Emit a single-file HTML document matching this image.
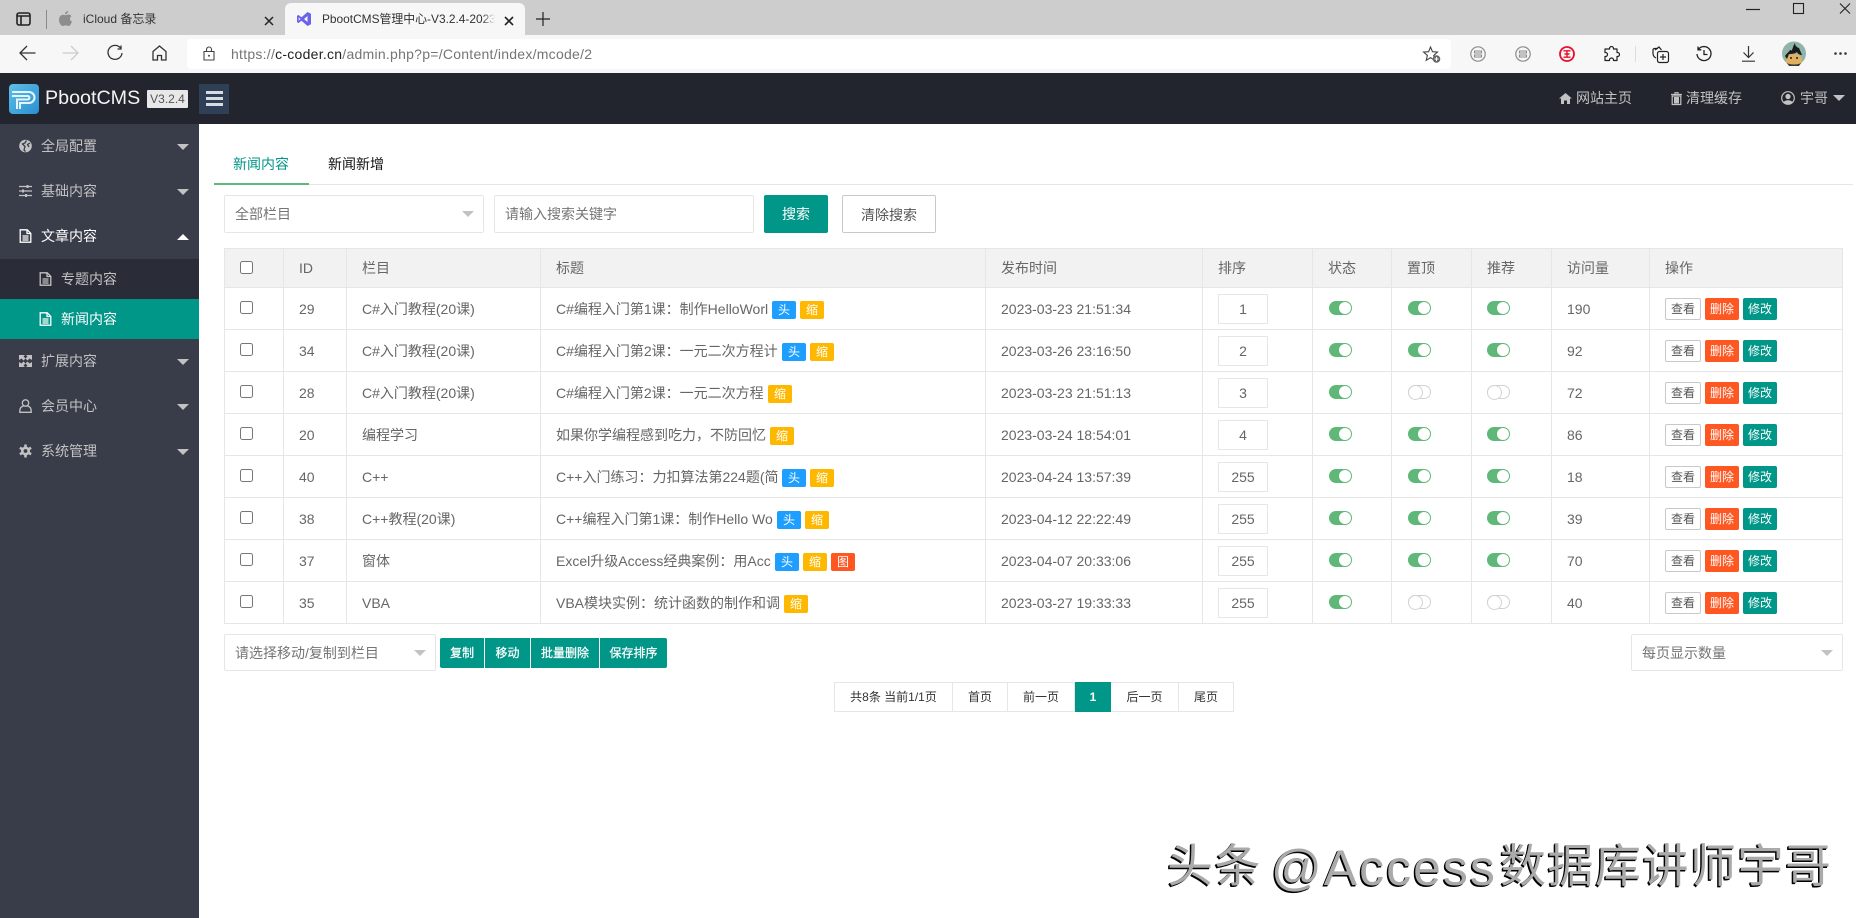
<!DOCTYPE html>
<html lang="zh"><head><meta charset="utf-8"><title>PbootCMS</title>
<style>
*{box-sizing:border-box}
html,body{margin:0;padding:0;width:1856px;height:918px;overflow:hidden;background:#fff;font-family:"Liberation Sans","Noto Sans CJK SC",sans-serif;font-size:14px;color:#666}
i{font-style:normal}
.a{position:absolute}
svg{display:block;overflow:visible}
.t{white-space:nowrap;line-height:20px}
.side{left:0;top:124px;width:199px;height:794px;background:#393d49}
.it{position:absolute;left:0;width:199px;height:45px;line-height:45px;color:#c2c2c2;padding-left:41px}
.it svg{position:absolute;left:19px;top:15px;width:13px;height:14px}
.car{position:absolute;left:177px;top:20px;width:0;height:0;border-left:6px solid transparent;border-right:6px solid transparent;border-top:6px solid #c2c2c2}
.sub{position:absolute;left:0;width:199px;height:40px;line-height:40px;padding-left:61px}
.sub svg{position:absolute;left:39px;top:13px;width:13px;height:14px}
.box{background:#fff;border:1px solid #e6e6e6;border-radius:2px;height:38px;line-height:37px;color:#757575;padding-left:10px}
.dc{position:absolute;width:0;height:0;border-left:6px solid transparent;border-right:6px solid transparent;border-top:6px solid #c2c2c2}
table{position:absolute;left:224px;top:248px;width:1619px;border-collapse:collapse;table-layout:fixed}
th,td{border:1px solid #e6e6e6;padding:0 15px;font-weight:400;text-align:left;color:#666;white-space:nowrap;position:relative}
th{height:39px;background:#f2f2f2}
td{height:42px}
.cb{display:block;position:relative;top:-1px;width:13px;height:13px;border:1px solid #767676;border-radius:2.5px;background:#fff}
.b{position:absolute;top:13px;width:24px;height:18px;line-height:18px;border-radius:2px;color:#fff;font-size:12px;text-align:center}
.h{background:#1e9fff}.o{background:#ffb800}.r{background:#ff5722}
.n{position:absolute;left:15px;top:6px;width:50px;height:30px;line-height:28px;border:1px solid #e6e6e6;text-align:center;color:#666;background:#fff}
.tg{position:absolute;top:13px;width:23px;height:14px;border-radius:7px;background:#5fb878}
.tg:after{content:"";position:absolute;right:1px;top:1px;width:12px;height:12px;border-radius:50%;background:#fff}
.tg.f{background:#fff;border:1.5px solid #d2d2d2}
.tg.f:after{right:auto;left:-1px;top:-1px;border:1.5px solid #d2d2d2;width:13px;height:13px}
.l{left:16px}.m{left:15px}
.ab{position:absolute;top:10px;height:22px;line-height:20px;font-size:12px;text-align:center;border-radius:2px;width:34px;color:#fff;border:1px solid transparent}
.v{left:15px;width:36px;background:#fff;border-color:#c9c9c9;color:#555}
.d{left:55px;background:#ff5722}
.e{left:93px;background:#009688}
.g{background:#009688;color:#fff;font-size:12px;text-align:center;height:30px;line-height:30px;top:638px;-webkit-text-stroke:.25px #fff}
.p{top:682px;height:30px;line-height:28px;border:1px solid #e6e6e6;border-left:0;font-size:12px;color:#333;text-align:center;background:#fff}
.w{position:absolute;white-space:nowrap;color:#aaa;text-shadow:-1.5px 1.5px 0 #000,-1px .5px 0 #111}
</style></head><body>

<svg width="0" height="0" style="position:absolute"><defs>
<symbol id="doc" viewBox="0 0 13 14"><path d="M1.2.8h7l3.600 3.600v8.800H1.200z M8 1v3.500h3.600 M3.500 7h6M3.500 9h6M3.500 11h6" fill="none" stroke="currentColor" stroke-width="1.300"/></symbol>
<symbol id="ring" viewBox="0 0 16 16"><circle cx="8" cy="8" r="7.200" fill="none" stroke="currentColor" stroke-width="1.200"/><path d="M4.500 5h7v2h-7zM4.500 9h7v2h-7z" fill="none" stroke="currentColor" stroke-width="1.100"/></symbol>
</defs></svg>

<!-- browser -->
<div class="a" style="left:0;top:0;width:1856px;height:35px;background:#cdcdcd"></div>
<div class="a" style="left:0;top:35px;width:1856px;height:38px;background:#f7f7f7"></div>
<svg class="a" style="left:16px;top:12px" width="15" height="14"><rect x="1" y="1" width="13" height="12" rx="2" fill="none" stroke="#222" stroke-width="1.600"/><path d="M1 4h13M5 4v9" stroke="#222" stroke-width="1.600"/></svg>
<div class="a" style="left:46px;top:10px;width:1px;height:19px;background:#8a8a8a"></div>
<svg class="a" style="left:59px;top:11px" width="13" height="15" viewBox="0 0 13 15"><path d="M9 0c0 2-1.500 3.300-3 3.300C6 1.500 7.500.2 9 0zM6.500 4.200c1 0 1.800-.7 3-.7 1.300 0 2.300.7 2.900 1.700-2.200 1.300-1.800 4.400.6 5.300-.7 1.900-2 4.500-3.500 4.500-1 0-1.500-.6-2.800-.6s-1.900.6-2.800.6C1.900 15 0 11.600 0 8.700 0 5.700 2 3.700 4 3.700c1 0 1.800.5 2.500.5z" fill="#8d8d8d"/></svg>
<div class="a t" style="left:83px;top:9px;font-size:12px;color:#333">iCloud 备忘录</div>
<svg class="a" style="left:264px;top:16px" width="10" height="10"><path d="M1 1l8 8M9 1l-8 8" stroke="#222" stroke-width="1.500"/></svg>
<div class="a" style="left:285px;top:3px;width:240px;height:32px;background:#f7f7f7;border-radius:6px 6px 0 0"></div>
<svg class="a" style="left:297px;top:12px" width="14" height="14" viewBox="0 0 14 14"><path d="M10.500 0L14 1.700v10.600L10.500 14 4.500 8.800 1.500 11 0 10.200V3.800L1.500 3l3 2.200zM10.500 4L7 7l3.500 3zM1.700 5.200v3.600L3.400 7z" fill="#6b63e8"/></svg>
<div class="a t" style="left:322px;top:9px;width:173px;overflow:hidden;font-size:11.9px;color:#333">PbootCMS管理中心-V3.2.4-2023</div>
<div class="a" style="left:482px;top:8px;width:13px;height:22px;background:linear-gradient(90deg,rgba(247,247,247,0),#f7f7f7)"></div>
<svg class="a" style="left:504px;top:16px" width="10" height="10"><path d="M1 1l8 8M9 1l-8 8" stroke="#222" stroke-width="1.600"/></svg>
<svg class="a" style="left:536px;top:12px" width="14" height="14"><path d="M7 0v14M0 7h14" stroke="#222" stroke-width="1.200"/></svg>
<svg class="a" style="left:1746px;top:3px" width="106" height="14"><path d="M0 6.500h14" stroke="#222" stroke-width="1.200"/><rect x="47.500" y=".5" width="10" height="10" fill="none" stroke="#222" stroke-width="1.100"/><path d="M94 .5l10 10M104 .5l-10 10" stroke="#222" stroke-width="1.100"/></svg>

<svg class="a" style="left:19px;top:45px" width="17" height="16"><path d="M16.500 8H1M8 1L1 8l7 7" fill="none" stroke="#333" stroke-width="1.300"/></svg>
<svg class="a" style="left:62px;top:45px" width="17" height="16"><path d="M.5 8H16M9 1l7 7-7 7" fill="none" stroke="#ccc" stroke-width="1.300"/></svg>
<svg class="a" style="left:107px;top:45px" width="16" height="16"><path d="M13.500 3A7 7 0 1 0 15 8M14 .5V4h-3.500" fill="none" stroke="#333" stroke-width="1.300"/></svg>
<svg class="a" style="left:152px;top:45px" width="15" height="16"><path d="M1 6.500L7.500 1 14 6.500V15H9.500v-4.500h-4V15H1z" fill="none" stroke="#333" stroke-width="1.300"/></svg>
<div class="a" style="left:187px;top:39px;width:1264px;height:30px;background:#fff;border-radius:4px"></div>
<svg class="a" style="left:203px;top:46px" width="12" height="15"><path d="M1 5.500h10V14H1zM3.500 5.500V3.500a2.500 2.500 0 0 1 5 0v2" fill="none" stroke="#444" stroke-width="1.100"/><circle cx="6" cy="9.700" r="1" fill="#444"/></svg>
<div class="a t" style="left:231px;top:44px;font-size:14px;color:#757575;letter-spacing:.26px">https://<span style="color:#222">c-coder.cn</span>/admin.php?p=/Content/index/mcode/2</div>
<svg class="a" style="left:1423px;top:46px" width="18" height="17"><path d="M7.500 1l2 4.700 5 .4-3.800 3.300 1.100 4.900-4.300-2.600-4.300 2.600 1.200-4.900L.6 6.100l5-.4z" fill="none" stroke="#444" stroke-width="1.100"/><circle cx="13.500" cy="13" r="3.800" fill="#666"/><path d="M13.500 11v4M11.500 13h4" stroke="#fff"/></svg>
<svg class="a" style="left:1470px;top:46px;color:#8c8c8c" width="16" height="16"><use href="#ring"/></svg>
<svg class="a" style="left:1515px;top:46px;color:#8c8c8c" width="16" height="16"><use href="#ring"/></svg>
<svg class="a" style="left:1559px;top:46px;color:#e60f2c" width="16" height="16"><circle cx="8" cy="8" r="7" fill="none" stroke="currentColor" stroke-width="1.800"/><path d="M4.500 4.800h7M4.500 11.200h7M8 4.800v6.400M5.500 8h5" stroke="currentColor" stroke-width="1.400"/></svg>
<svg class="a" style="left:1604px;top:46px" width="15" height="16"><path d="M5.500 3V2.500a2 2 0 0 1 4 0V3H13v3.500h.5a2 2 0 0 1 0 4H13V14.500H9.500V14a2 2 0 0 0-4 0v.5H1v-4h.5a2 2 0 0 0 0-4H1V3z" fill="none" stroke="#222" stroke-width="1.200" stroke-linejoin="round"/></svg>
<div class="a" style="left:1635px;top:46px;width:1px;height:16px;background:#ddd"></div>
<svg class="a" style="left:1652px;top:46px" width="17" height="17"><path d="M6 2.500H2.500A1.500 1.500 0 0 0 1 4v3.500c0 2 1 3.500 3 4.500" fill="none" stroke="#222" stroke-width="1.200"/><path d="M3 4l4-3 2.500 3" fill="none" stroke="#222" stroke-width="1.200"/><rect x="5.500" y="5.500" width="11" height="11" rx="2" fill="#f7f7f7" stroke="#222" stroke-width="1.200"/><path d="M11 8v6M8 11h6" stroke="#222" stroke-width="1.200"/></svg>
<svg class="a" style="left:1696px;top:46px" width="16" height="16"><path d="M2.300 3.500A7 7 0 1 1 1 8M2 .5v3.300h3.300M8 4v4.500h3.500" fill="none" stroke="#222" stroke-width="1.300"/></svg>
<svg class="a" style="left:1742px;top:46px" width="13" height="16"><path d="M6.500 0v11.500M1.500 6.500l5 5 5-5M0 15.200h13" fill="none" stroke="#333" stroke-width="1.200"/></svg>
<svg class="a" style="left:1782px;top:41px" width="24" height="25" viewBox="0 0 24 25"><circle cx="12" cy="12.500" r="12" fill="#8fb5aa"/><path d="M5 23c-2-5-1-10 7-10s9 5 7 10c-3 2-11 2-14 0z" fill="#e0b060"/><path d="M3 15c2-3 4-4 5-6 1 0 1 1 2 0 1-2 1-4 3-7 0 2 1 4 4 5l3 7c-2 0-4-1-5-3-2 2-6 2-8 2l-2 5z" fill="#1a1a1a"/><circle cx="9" cy="17" r="1" fill="#222"/><circle cx="15" cy="17" r="1" fill="#222"/><path d="M5 22c3 2 11 2 14 0l-2 3H7z" fill="#3a3a3a"/></svg>
<svg class="a" style="left:1834px;top:52px" width="13" height="3"><circle cx="1.500" cy="1.500" r="1.300" fill="#333"/><circle cx="6.500" cy="1.500" r="1.300" fill="#333"/><circle cx="11.500" cy="1.500" r="1.300" fill="#333"/></svg>

<!-- header -->
<div class="a" style="left:0;top:73px;width:1856px;height:51px;background:#22252e"></div>
<svg class="a" style="left:9px;top:84px" width="30" height="30" viewBox="0 0 30 30"><defs><linearGradient id="lg" x1="0" y1="0" x2="1" y2="1"><stop offset="0" stop-color="#5ebfe8"/><stop offset="1" stop-color="#2a8fd0"/></linearGradient></defs><rect width="30" height="30" rx="4" fill="url(#lg)"/><path d="M3 8h17a5.500 5.500 0 0 1 0 11h-9v6M3 12h16a1.800 1.800 0 0 1 0 3.500H8V25" fill="none" stroke="#e6f5fc" stroke-width="2"/></svg>
<div class="a t" style="left:45px;top:86px;font-size:19.7px;line-height:24px;color:#f3f3f3">PbootCMS</div>
<div class="a" style="left:147px;top:90px;width:41px;height:18px;line-height:18px;background:#e8e8e8;color:#555;font-size:12px;text-align:center;border-radius:1px">V3.2.4</div>
<div class="a" style="left:199px;top:84px;width:30px;height:30px;background:#2f4056"></div>
<div class="a" style="left:206px;top:91px;width:17px;height:3px;background:#d8dce0"></div>
<div class="a" style="left:206px;top:97px;width:17px;height:3px;background:#d8dce0"></div>
<div class="a" style="left:206px;top:103px;width:17px;height:3px;background:#d8dce0"></div>
<svg class="a" style="left:1559px;top:93px" width="13" height="11"><path d="M6.500 0L13 5.500h-2V11H8V7.500H5V11H2V5.500H0z" fill="#c2c2c2"/></svg>
<div class="a t" style="left:1576px;top:88px;color:#c2c2c2">网站主页</div>
<svg class="a" style="left:1671px;top:92px" width="11" height="13"><path d="M0 2.500h11M4 2.500V.7h3v1.800M1.200 4h8.600v8.500H1.200z" fill="none" stroke="#c2c2c2" stroke-width="1.200"/><path d="M3 5h5v6.500H3z" fill="#c2c2c2"/></svg>
<div class="a t" style="left:1686px;top:88px;color:#c2c2c2">清理缓存</div>
<svg class="a" style="left:1781px;top:91px" width="14" height="14"><circle cx="7" cy="7" r="6.300" fill="none" stroke="#c2c2c2" stroke-width="1.200"/><circle cx="7" cy="5.500" r="2.600" fill="#c2c2c2"/><path d="M2.500 11.500c1-3 8-3 9 0-2 2-7 2-9 0z" fill="#c2c2c2"/></svg>
<div class="a t" style="left:1800px;top:88px;color:#c2c2c2">宇哥</div>
<div class="a" style="left:1833px;top:95px;width:0;height:0;border-left:6px solid transparent;border-right:6px solid transparent;border-top:6px solid #c2c2c2"></div>

<!-- sidebar -->
<div class="a side">
<div class="it" style="top:0"><svg viewBox="0 0 13 14"><circle cx="6.500" cy="7" r="6.300" fill="#c2c2c2"/><path d="M7.500 1.500L6 4 3.500 5 6 7.500 5 11l1.500 1.500M11 4L8.500 5.500 10 8" stroke="#393d49" stroke-width="1.300" fill="none"/></svg>全局配置<i class="car"></i></div>
<div class="it" style="top:45px"><svg viewBox="0 0 13 14"><path d="M0 2.500h13M0 7h13M0 11.500h13" stroke="#c2c2c2" stroke-width="1.200"/><rect x="7.500" y="1" width="2" height="3" fill="#c2c2c2"/><rect x="3" y="5.500" width="2" height="3" fill="#c2c2c2"/><rect x="6" y="10" width="2" height="3" fill="#c2c2c2"/></svg>基础内容<i class="car"></i></div>
<div class="it" style="top:90px;color:#fff"><svg style="color:#fff"><use href="#doc"/></svg>文章内容<i class="car" style="border-top:0;border-bottom:6px solid #fff"></i></div>
<div class="sub" style="top:135px;background:#2a2d38;color:#c2c2c2"><svg style="color:#c2c2c2"><use href="#doc"/></svg>专题内容</div>
<div class="sub" style="top:175px;background:#009688;color:#fff"><svg style="color:#fff"><use href="#doc"/></svg>新闻内容</div>
<div class="it" style="top:215px"><svg viewBox="0 0 13 14"><path d="M0 1h6L4.500 2.500 6.500 4.500 4.500 6.500 2.500 4.500 0 6zM13 1H7l1.500 1.500-2 2 2 2 2-2L13 6zM0 13H6L4.500 11.500l2-2-2-2-2 2L0 8zM13 13H7l1.500-1.500-2-2 2-2 2 2L13 8z" fill="#c2c2c2"/></svg>扩展内容<i class="car"></i></div>
<div class="it" style="top:260px"><svg viewBox="0 0 13 14"><circle cx="6.500" cy="4" r="3.200" fill="none" stroke="#c2c2c2" stroke-width="1.300"/><path d="M4.500 7C1 8 .8 10 .8 13.300h11.400c0-3.300-.2-5.300-3.700-6.300" fill="none" stroke="#c2c2c2" stroke-width="1.300"/></svg>会员中心<i class="car"></i></div>
<div class="it" style="top:305px"><svg viewBox="0 0 13 14"><path d="M6.500 .5v13M.9 3.700l11.200 6.600M.9 10.300l11.200-6.600" stroke="#c2c2c2" stroke-width="2.600"/><circle cx="6.500" cy="7" r="4.500" fill="#c2c2c2"/><circle cx="6.500" cy="7" r="1.900" fill="#393d49"/></svg>系统管理<i class="car"></i></div>
</div>

<!-- tabs -->
<div class="a" style="left:214px;top:184px;width:1639px;height:1px;background:#e6e6e6"></div>
<div class="a" style="left:214px;top:183px;width:95px;height:2px;background:#5fb878"></div>
<div class="a t" style="left:233px;top:154px;color:#009688">新闻内容</div>
<div class="a t" style="left:328px;top:154px;color:#111">新闻新增</div>

<!-- search -->
<div class="a box" style="left:224px;top:195px;width:260px">全部栏目</div><i class="dc" style="left:462px;top:211px"></i>
<div class="a box" style="left:494px;top:195px;width:260px">请输入搜索关键字</div>
<div class="a" style="left:764px;top:195px;width:64px;height:38px;line-height:38px;background:#009688;color:#fff;text-align:center;border-radius:2px">搜索</div>
<div class="a" style="left:842px;top:195px;width:94px;height:38px;line-height:38px;background:#fff;border:1px solid #c9c9c9;color:#555;text-align:center;border-radius:2px">清除搜索</div>

<!-- table -->
<table>
<colgroup><col style="width:59px"><col style="width:63px"><col style="width:194px"><col style="width:445px"><col style="width:217px"><col style="width:110px"><col style="width:79px"><col style="width:80px"><col style="width:80px"><col style="width:98px"><col></colgroup>
<tr><th><i class="cb"></i></th><th>ID</th><th>栏目</th><th>标题</th><th>发布时间</th><th>排序</th><th>状态</th><th>置顶</th><th>推荐</th><th>访问量</th><th>操作</th></tr>
<tr><td><i class="cb"></i></td><td>29</td><td>C#入门教程(20课)</td><td>C#编程入门第1课：制作HelloWorl<i class="b h" style="left:231px">头</i><i class="b o" style="left:259px">缩</i></td><td>2023-03-23 21:51:34</td><td><span class="n">1</span></td><td><i class="tg l"></i></td><td><i class="tg l"></i></td><td><i class="tg m"></i></td><td>190</td><td><span class="ab v">查看</span><span class="ab d">删除</span><span class="ab e">修改</span></td></tr>
<tr><td><i class="cb"></i></td><td>34</td><td>C#入门教程(20课)</td><td>C#编程入门第2课：一元二次方程计<i class="b h" style="left:241px">头</i><i class="b o" style="left:269px">缩</i></td><td>2023-03-26 23:16:50</td><td><span class="n">2</span></td><td><i class="tg l"></i></td><td><i class="tg l"></i></td><td><i class="tg m"></i></td><td>92</td><td><span class="ab v">查看</span><span class="ab d">删除</span><span class="ab e">修改</span></td></tr>
<tr><td><i class="cb"></i></td><td>28</td><td>C#入门教程(20课)</td><td>C#编程入门第2课：一元二次方程<i class="b o" style="left:227px">缩</i></td><td>2023-03-23 21:51:13</td><td><span class="n">3</span></td><td><i class="tg l"></i></td><td><i class="tg l f"></i></td><td><i class="tg m f"></i></td><td>72</td><td><span class="ab v">查看</span><span class="ab d">删除</span><span class="ab e">修改</span></td></tr>
<tr><td><i class="cb"></i></td><td>20</td><td>编程学习</td><td>如果你学编程感到吃力，不防回忆<i class="b o" style="left:229px">缩</i></td><td>2023-03-24 18:54:01</td><td><span class="n">4</span></td><td><i class="tg l"></i></td><td><i class="tg l"></i></td><td><i class="tg m"></i></td><td>86</td><td><span class="ab v">查看</span><span class="ab d">删除</span><span class="ab e">修改</span></td></tr>
<tr><td><i class="cb"></i></td><td>40</td><td>C++</td><td>C++入门练习：力扣算法第224题(简<i class="b h" style="left:241px">头</i><i class="b o" style="left:269px">缩</i></td><td>2023-04-24 13:57:39</td><td><span class="n">255</span></td><td><i class="tg l"></i></td><td><i class="tg l"></i></td><td><i class="tg m"></i></td><td>18</td><td><span class="ab v">查看</span><span class="ab d">删除</span><span class="ab e">修改</span></td></tr>
<tr><td><i class="cb"></i></td><td>38</td><td>C++教程(20课)</td><td>C++编程入门第1课：制作Hello Wo<i class="b h" style="left:236px">头</i><i class="b o" style="left:264px">缩</i></td><td>2023-04-12 22:22:49</td><td><span class="n">255</span></td><td><i class="tg l"></i></td><td><i class="tg l"></i></td><td><i class="tg m"></i></td><td>39</td><td><span class="ab v">查看</span><span class="ab d">删除</span><span class="ab e">修改</span></td></tr>
<tr><td><i class="cb"></i></td><td>37</td><td>窗体</td><td>Excel升级Access经典案例：用Acc<i class="b h" style="left:234px">头</i><i class="b o" style="left:262px">缩</i><i class="b r" style="left:290px">图</i></td><td>2023-04-07 20:33:06</td><td><span class="n">255</span></td><td><i class="tg l"></i></td><td><i class="tg l"></i></td><td><i class="tg m"></i></td><td>70</td><td><span class="ab v">查看</span><span class="ab d">删除</span><span class="ab e">修改</span></td></tr>
<tr><td><i class="cb"></i></td><td>35</td><td>VBA</td><td>VBA模块实例：统计函数的制作和调<i class="b o" style="left:243px">缩</i></td><td>2023-03-27 19:33:33</td><td><span class="n">255</span></td><td><i class="tg l"></i></td><td><i class="tg l f"></i></td><td><i class="tg m f"></i></td><td>40</td><td><span class="ab v">查看</span><span class="ab d">删除</span><span class="ab e">修改</span></td></tr>
</table>

<!-- bottom -->
<div class="a box" style="left:224px;top:634px;width:212px;height:37px;line-height:36px">请选择移动/复制到栏目</div><i class="dc" style="left:414px;top:650px"></i>
<div class="a g" style="left:440px;width:44px;border-radius:2px 0 0 2px">复制</div>
<div class="a g" style="left:485px;width:45px">移动</div>
<div class="a g" style="left:531px;width:68px">批量删除</div>
<div class="a g" style="left:600px;width:67px;border-radius:0 2px 2px 0">保存排序</div>
<div class="a box" style="left:1631px;top:634px;width:212px;height:37px;line-height:36px">每页显示数量</div><i class="dc" style="left:1821px;top:650px"></i>

<div class="a p" style="left:834px;width:119px;border-left:1px solid #e6e6e6">共8条 当前1/1页</div>
<div class="a p" style="left:953px;width:55px">首页</div>
<div class="a p" style="left:1008px;width:67px">前一页</div>
<div class="a p" style="left:1075px;width:36px;background:#009688;color:#fff;border:0;line-height:30px;font-weight:700">1</div>
<div class="a p" style="left:1111px;width:68px">后一页</div>
<div class="a p" style="left:1179px;width:55px">尾页</div>

<!-- watermark -->
<div class="w" style="left:1167px;top:836px;font-size:46px;line-height:60px;letter-spacing:1.500px">头条</div>
<div class="w" style="left:1271px;top:838px;font-size:50px;line-height:60px;letter-spacing:2px">@Access</div>
<div class="w" style="left:1500px;top:836px;font-size:46px;line-height:60px;letter-spacing:1.500px">数据库讲师宇哥</div>
</body></html>
